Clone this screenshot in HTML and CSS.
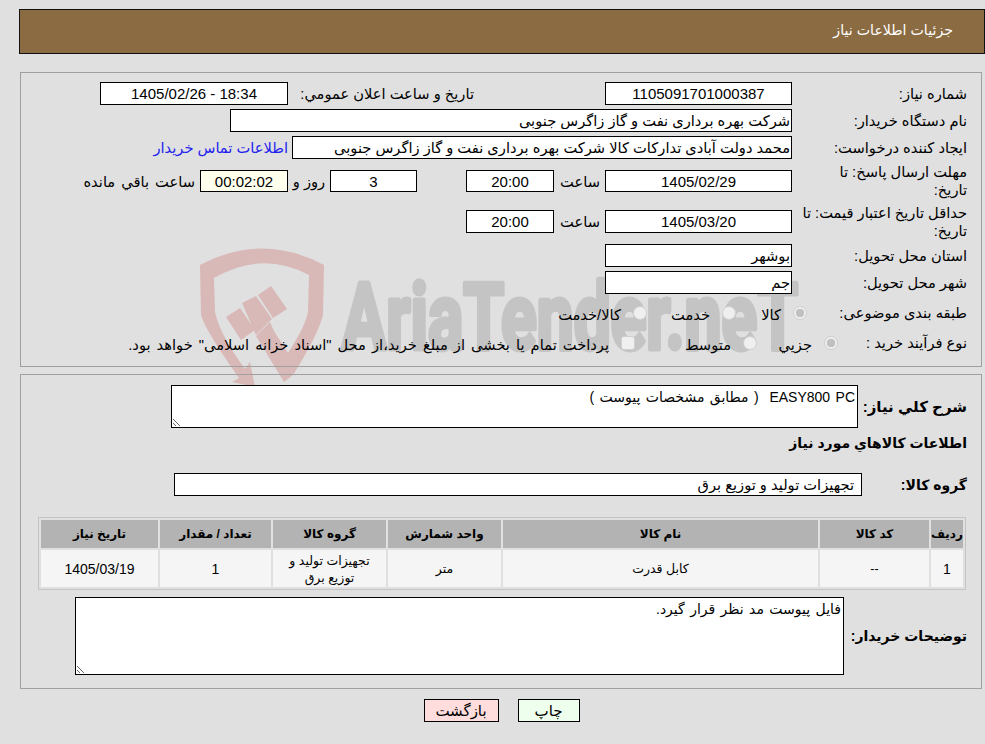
FILE: index.html
```html
<!DOCTYPE html>
<html lang="fa" dir="rtl">
<head>
<meta charset="utf-8">
<title>جزئیات اطلاعات نیاز</title>
<link rel="stylesheet" href="styles.css">
</head>
<body>
<svg class="watermark" viewBox="0 0 985 744" aria-hidden="true">
  <path class="wm-red" fill-rule="evenodd" d="M200 265 Q262 232 324 265 L323 315 Q318 335 293 375 L270 325 L288 353 Q306 325 308 312 L309 275 Q262 250 214 278 L215 312 Q220 335 245 369 L250 362 L255 387 L232 382 L239 378 Q205 330 201 315 Z"/>
  <path class="wm-red" d="M226 317 L240 308 L255 330 L241 340 Z M242 303 L256 296 L272 319 L256 335 Z M258 295 L271 286 L287 309 L273 318 Z M256 336 L270 322 L293 375 L284 382 Z"/>
  <text class="wm-text" x="342" y="349" textLength="456" lengthAdjust="spacingAndGlyphs" direction="ltr">AriaTender.neT</text>
</svg>

<header class="title-bar">جزئیات اطلاعات نیاز</header>

<section class="panel panel-info">
  <div class="row r-std">
    <div class="lbl">شماره نیاز:</div>
    <input class="field w187 center" readonly value="1105091701000387">
    <span class="announce">تاریخ و ساعت اعلان عمومي:</span>
    <input class="field w188 center" readonly value="18:34 - 1405/02/26">
  </div>
  <div class="row r-std">
    <div class="lbl">نام دستگاه خریدار:</div>
    <input class="field w562" readonly value="شرکت بهره برداری نفت و گاز زاگرس جنوبی">
  </div>
  <div class="row r-std r-gap">
    <div class="lbl">ایجاد کننده درخواست:</div>
    <input class="field w500" readonly value="محمد دولت آبادی تدارکات کالا شرکت بهره برداری نفت و گاز زاگرس جنوبی">
    <a class="contact" href="#">اطلاعات تماس خریدار</a>
  </div>
  <div class="row r-deadline">
    <div class="lbl lbl-narrow">مهلت ارسال پاسخ: تا تاریخ:</div>
    <input class="field w187 short center" readonly value="1405/02/29">
    <span class="hour">ساعت</span>
    <input class="field w88 short center" readonly value="20:00">
    <input class="field w87 short center days" readonly value="3">
    <span class="day-word">روز و</span>
    <input class="field w88 short center timer" readonly value="00:02:02">
    <span class="left-word">ساعت باقي مانده</span>
  </div>
  <div class="row r-validity">
    <div class="lbl">حداقل تاریخ اعتبار قیمت: تا تاریخ:</div>
    <input class="field w187 center" readonly value="1405/03/20">
    <span class="hour">ساعت</span>
    <input class="field w88 center" readonly value="20:00">
  </div>
  <div class="row r-std">
    <div class="lbl">استان محل تحویل:</div>
    <input class="field w187" readonly value="بوشهر">
  </div>
  <div class="row r-std r-gap8">
    <div class="lbl">شهر محل تحویل:</div>
    <input class="field w187" readonly value="جم">
  </div>
  <div class="row r-choice r-gap8b">
    <div class="lbl lbl-160">طبقه بندی موضوعی:</div>
    <label class="opt o71"><input type="radio" class="pick" name="cat" checked disabled><span>کالا</span></label>
    <label class="opt o89"><input type="radio" class="pick" name="cat" disabled><span>خدمت</span></label>
    <label class="opt"><input type="radio" class="pick" name="cat" disabled><span>کالا/خدمت</span></label>
  </div>
  <div class="row r-choice">
    <div class="lbl lbl-129">نوع فرآیند خرید :</div>
    <label class="opt o81"><input type="radio" class="pick" name="proc" checked disabled><span>جزیي</span></label>
    <label class="opt o122"><input type="radio" class="pick" name="proc" disabled><span>متوسط</span></label>
    <label class="opt"><input type="checkbox" class="pick pick-sq" disabled><span class="wide">پرداخت تمام یا بخشی از مبلغ خرید،از محل "اسناد خزانه اسلامی" خواهد بود.</span></label>
  </div>
</section>

<section class="panel panel-items">
  <div class="row">
    <div class="lbl-b w109 lbl-lg">شرح کلي نیاز:</div>
    <textarea class="area a-desc" readonly>EASY800 PC  ( مطابق مشخصات پیوست )</textarea>
  </div>
  <h2 class="heading">اطلاعات کالاهاي مورد نیاز</h2>
  <div class="row r-group">
    <div class="lbl-b w105">گروه کالا:</div>
    <input class="field w688 small" readonly value="تجهیزات تولید و توزیع برق">
  </div>
  <table class="items">
    <colgroup>
      <col class="c1"><col class="c2"><col class="c3"><col class="c4"><col class="c5"><col class="c6"><col class="c7">
    </colgroup>
    <thead>
      <tr><th>ردیف</th><th>کد کالا</th><th>نام کالا</th><th>واحد شمارش</th><th>گروه کالا</th><th>تعداد / مقدار</th><th>تاریخ نیاز</th></tr>
    </thead>
    <tbody>
      <tr><td class="num">1</td><td>--</td><td>کابل قدرت</td><td>متر</td><td>تجهیزات تولید و توزیع برق</td><td class="num">1</td><td class="num">1405/03/19</td></tr>
    </tbody>
  </table>
  <div class="row r-note">
    <div class="lbl-b w123">توضیحات خریدار:</div>
    <textarea class="area a-note" readonly>فایل پیوست مد نظر قرار گیرد.</textarea>
  </div>
</section>

<div class="actions">
  <button class="btn btn-print" type="button">چاپ</button>
  <button class="btn btn-back" type="button">بازگشت</button>
</div>
</body>
</html>
```
FILE: styles.css
```css
html { background: #e0e0e0; }
body {
  margin: 0;
  padding: 9px 0 0;
  height: 735px;
  overflow: hidden;
  font-family: "Liberation Sans", "DejaVu Sans", sans-serif;
  font-size: 14.67px;
  color: #000;
}
.watermark { position: absolute; left: 0; top: 0; width: 985px; height: 744px; z-index: -1; }
.wm-red { fill: #d9b8b8; }
.wm-text {
  fill: #c4c4c4; stroke: #c4c4c4; stroke-width: 5px; stroke-linejoin: round;
  font-family: "Roboto", "Liberation Sans", sans-serif;
  font-weight: 700; font-size: 92px;
}
.title-bar {
  margin-left: 19px;
  height: 45px; box-sizing: border-box;
  border: 1px solid #111;
  background: #8b6b42;
  color: #fff;
  padding-right: 31px;
  line-height: 41px;
  font-size: 14.2px;
}
.panel {
  margin-right: 3px;
  box-sizing: border-box;
  width: 962px;
  border: 1px solid #a0a0a0;
  padding: 0 14px 0 0;
}
.panel-info { margin-top: 18px; height: 295px; padding-top: 9px; }
.panel-items { margin-top: 7px; height: 315px; padding-top: 10px; }
.row { display: flex; align-items: center; }
.r-std { height: 23px; margin-bottom: 4px; }
.r-gap { margin-bottom: 6px; }
.r-gap8 { margin-bottom: 8px; }
.r-deadline { height: 32px; margin-bottom: 8px; }
.r-validity { height: 33px; margin-bottom: 6px; }
.r-choice { height: 22px; }
.r-gap8b { margin-bottom: 8px; }
.lbl { width: 175px; flex: none; line-height: 18px; padding-left: 5px; box-sizing: border-box; }
.lbl-narrow { padding-left: 16px; }
.lbl-160 { width: 160px; padding-left: 0; white-space: nowrap; }
.lbl-129 { width: 129px; padding-left: 0; white-space: nowrap; }
.field {
  box-sizing: border-box; flex: none; height: 23px; margin: 0;
  border: 1px solid #000; background: #fff; color: #000;
  padding: 0 1px;
  font: 14.67px "Liberation Sans", "DejaVu Sans", sans-serif;
  outline: none;
}
.short { height: 22px; }
.center { text-align: center; font-size: 15px; }
.w187 { width: 187px; }
.w188 { width: 188px; margin-right: 5px; }
.w562 { width: 562px; }
.w500 { width: 500px; }
.w88 { width: 88px; }
.w87 { width: 87px; }
.w688 { width: 688px; }
.days { margin-right: 49px; }
.timer { background: #ffffee; }
.announce { width: 181px; margin-right: 131px; flex: none; white-space: nowrap; }
.contact { margin-right: 4px; color: #2222ee; text-decoration: none; white-space: nowrap; }
.hour { width: 46px; margin-right: 5px; flex: none; }
.day-word { width: 42px; text-align: center; flex: none; }
.left-word { margin-right: 5px; white-space: nowrap; word-spacing: 2px; }
.opt { display: flex; align-items: center; flex: none; white-space: nowrap; }
.opt span { margin-right: 12px; padding-top: 3px; }
.opt .wide { word-spacing: 2px; }
.o71 { width: 71px; }
.o89 { width: 89px; }
.o81 { width: 81px; }
.o122 { width: 122px; }
.pick {
  appearance: none; -webkit-appearance: none;
  width: 14px; height: 14px; margin: 0; flex: none;
  border: 1px solid #cfcfcf; border-radius: 50%;
  background: #efefef; box-sizing: border-box;
}
.pick:checked { background: radial-gradient(circle, #c0c0c0 0 4px, #efefef 4.5px); }
.pick-sq { border-radius: 3px; background: #f0f0f0; }
.lbl-b { font-weight: 700; font-size: 14px; flex: none; white-space: nowrap; }
.lbl-lg { font-size: 15px; }
.w109 { width: 109px; }
.w105 { width: 105px; }
.w123 { width: 123px; }
.area {
  box-sizing: border-box; margin: 0; flex: none; display: block;
  border: 1px solid #000; background: #fff; color: #000;
  padding: 3px 2px 2px; outline: none;
  font: 14px "Liberation Sans", "DejaVu Sans", sans-serif;
  word-spacing: 1.5px;
}
.a-desc { width: 687px; height: 43px; }
.a-note { width: 769px; height: 78px; }
.heading { margin: 0; height: 30px; line-height: 30px; font-size: 14px; font-weight: 700; }
.r-group { margin-top: 15px; }
.small { padding-right: 7px; }
.items {
  width: 928px; height: 73px; margin: 21px 1px 0 0;
  box-sizing: border-box; table-layout: fixed;
  border-collapse: separate; border-spacing: 2px;
  border: 1px solid #c4c4c4;
  font-size: 12.5px;
}
.c1 { width: 32px; } .c2 { width: 109px; } .c3 { width: 315px; } .c4 { width: 113px; }
.c5 { width: 113px; } .c6 { width: 111px; } .c7 { width: 117px; }
.items th { background: #b3b3b3; height: 28px; padding: 0; font-weight: 700; font-size: 12px; }
.items td { background: #f5f5f5; height: 37px; padding: 2px 10px 0; box-sizing: border-box; text-align: center; line-height: 17px; }
.items .num { font-size: 14px; }
.r-note { margin-top: 7px; }
.actions { display: flex; justify-content: center; gap: 19px; padding: 10px 0 0 18px; }
.btn {
  height: 23px; box-sizing: border-box; margin: 0; padding: 0;
  border: 1px solid #000; color: #000;
  font: 15px "Liberation Sans", "DejaVu Sans", sans-serif;
}
.btn-print { width: 62px; background: #eeffee; }
.btn-back { width: 75px; background: #ffdddd; }
```
